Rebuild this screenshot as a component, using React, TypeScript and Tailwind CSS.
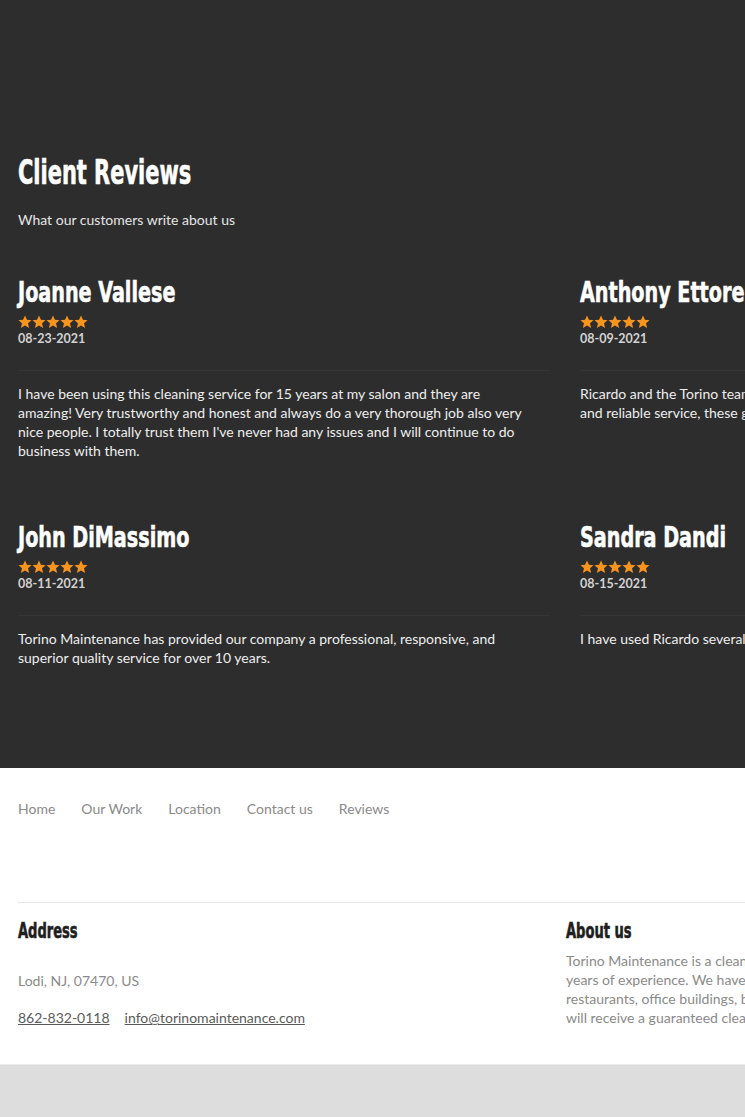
import React from 'react'

interface Review {
  name: string;
  date: string;
  text: string;
}

const reviews: Review[] = [
  {
    name: "Joanne Vallese",
    date: "08-23-2021",
    text: "I have been using this cleaning service for 15 years at my salon and they are amazing! Very trustworthy and honest and always do a very thorough job also very nice people. I totally trust them I've never had any issues and I will continue to do business with them.",
  },
  {
    name: "Anthony Ettore",
    date: "08-09-2021",
    text: "Ricardo and the Torino team have provided our offices with a professional\nand reliable service, these guys always go above and beyond for us.",
  },
  {
    name: "John DiMassimo",
    date: "08-11-2021",
    text: "Torino Maintenance has provided our company a professional, responsive, and superior quality service for over 10 years.",
  },
  {
    name: "Sandra Dandi",
    date: "08-15-2021",
    text: "I have used Ricardo several times and would recommend him.",
  },
]

// condensed display face, squeezed to match the narrow headline font
const heading = "inline-block origin-left font-['DejaVu_Sans_Condensed','DejaVu_Sans',sans-serif] font-bold whitespace-nowrap [-webkit-text-stroke:0.6px]"
const body = "font-['Lato','Noto_Sans',sans-serif]"

const Stars = () => (
  <div className="flex">
    {[0, 1, 2, 3, 4].map((i) => (
      <svg key={i} width="14" height="14" viewBox="0 0 24 24">
        <path
          fill="#f7941d"
          d="M12 1l3.3 7.3 7.9.7-6 5.3 1.8 7.8L12 18l-7 4.1 1.8-7.8-6-5.3 7.9-.7z"
        />
      </svg>
    ))}
  </div>
)

const ReviewCard: React.FC<{ review: Review }> = ({ review }) => (
  <div className="h-[245px]">
    <h3 className="h-[34px]">
      <span className={`${heading} scale-x-[0.735] text-white text-[29px] leading-[34px]`}>{review.name}</span>
    </h3>
    <div className="mt-[6px]">
      <Stars />
    </div>
    <div className={`${body} mt-[2px] text-[#d2d2d2] text-[12.5px] font-bold leading-[16px]`}>{review.date}</div>
    <div className="mt-[23px] h-px w-[532px] bg-[#353535]" />
    <p className={`${body} mt-[13px] w-[518px] whitespace-pre-line text-[#eeeeee] text-[14px] leading-[19px]`}>{review.text}</p>
  </div>
)

export default function App() {
  return (
    <div className="w-full overflow-hidden bg-[#dddddd]">
      <div className="w-[1130px]">
        {/* Reviews */}
        <section className="bg-[#2d2d2d] px-[18px] pt-[152px] h-[768px]">
          <h2 className="h-[42px]">
            <span className={`${heading} scale-x-[0.705] text-white text-[33px] leading-[42px]`}>Client Reviews</span>
          </h2>
          <p className={`${body} mt-[15px] text-[#e6e6e6] text-[14px]`}>What our customers write about us</p>

          <div className="mt-[45px] grid grid-cols-[545px_545px] gap-x-[17px]">
            {reviews.map((r) => (
              <ReviewCard key={r.name} review={r} />
            ))}
          </div>
        </section>

        {/* Footer */}
        <footer className="bg-white h-[297px] border-b border-[#ebebeb] px-[18px]">
          <nav className={`${body} flex gap-[26px] pt-[30px] text-[#8a8a8a] text-[14px]`}>
            <span>Home</span>
            <span>Our Work</span>
            <span>Location</span>
            <span>Contact us</span>
            <span>Reviews</span>
          </nav>

          <div className="mt-[83px] h-px bg-[#e6e6e6]" />

          <div className="grid grid-cols-[548px_1fr] pt-[15px]">
            <div>
              <h4 className="h-[26px]">
                <span className={`${heading} scale-x-[0.69] text-[#1e1e1e] text-[21px] leading-[26px]`}>Address</span>
              </h4>
              <p className={`${body} mt-[26px] text-[#8a8a8a] text-[14px]`}>Lodi, NJ, 07470, US</p>
              <div className={`${body} mt-[16px] flex gap-[15px] text-[#5a5a5a] text-[14px]`}>
                <a className="underline">862-832-0118</a>
                <a className="underline">info@torinomaintenance.com</a>
              </div>
            </div>
            <div>
              <h4 className="h-[26px]">
                <span className={`${heading} scale-x-[0.69] text-[#1e1e1e] text-[21px] leading-[26px]`}>About us</span>
              </h4>
              <p className={`${body} mt-[7px] text-[#8a8a8a] text-[14px] leading-[19px]`}>
                Torino Maintenance is a cleaning company with over 15
                <br />
                years of experience. We have cleaned homes, salons,
                <br />
                restaurants, office buildings, banks and more. You
                <br />
                will receive a guaranteed clean every single time.
              </p>
            </div>
          </div>
        </footer>

        <div className="h-[52px] bg-[#dddddd]" />
      </div>
    </div>
  )
}
